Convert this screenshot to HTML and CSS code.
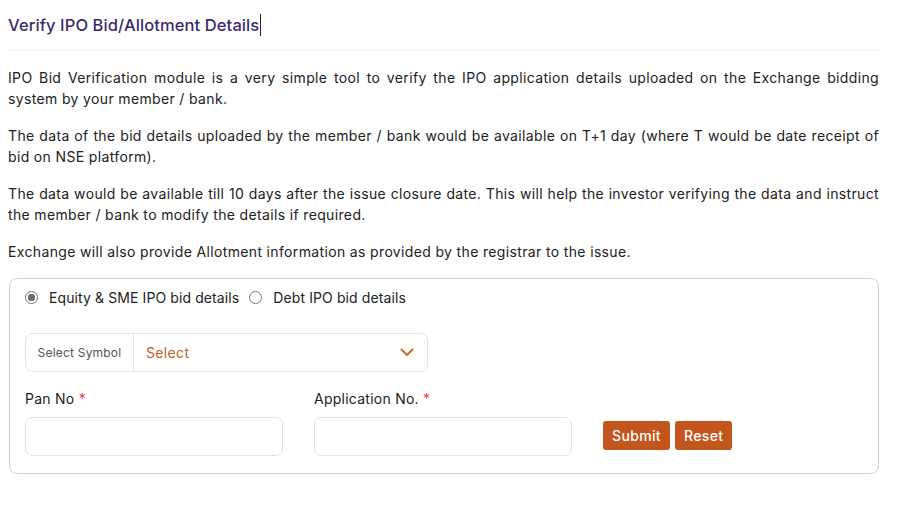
FILE: index.html
```html
<!DOCTYPE html>
<html lang="en">
<head>
<meta charset="utf-8">
<title>Verify IPO Bid/Allotment Details</title>
<link rel="stylesheet" href="styles.css">
</head>
<body>
<div class="page">
  <div class="title-row">
    <h1 class="title">Verify IPO Bid/Allotment Details</h1><span class="caret"></span>
  </div>
  <div class="content">
    <p>IPO Bid Verification module is a very simple tool to verify the IPO application details uploaded on the Exchange bidding system by your member / bank.</p>
    <p>The data of the bid details uploaded by the member / bank would be available on T+1 day (where T would be date receipt of bid on NSE platform).</p>
    <p>The data would be available till 10 days after the issue closure date. This will help the investor verifying the data and instruct the member / bank to modify the details if required.</p>
    <p>Exchange will also provide Allotment information as provided by the registrar to the issue.</p>
  </div>
  <form class="card">
    <div class="radios">
      <label class="radio"><span class="dot checked"></span>Equity &amp; SME IPO bid details</label>
      <label class="radio"><span class="dot"></span>Debt IPO bid details</label>
    </div>
    <div class="select-group">
      <span class="addon">Select Symbol</span>
      <span class="select">Select
        <svg class="chev" width="14" height="9" viewBox="0 0 14 9"><path d="M1.5 1.5 L7 7 L12.5 1.5" fill="none" stroke="#d2691e" stroke-width="2" stroke-linecap="round" stroke-linejoin="round"/></svg>
      </span>
    </div>
    <div class="fields">
      <div class="field">
        <div class="label">Pan No <span class="req">*</span></div>
        <div class="input"></div>
      </div>
      <div class="field">
        <div class="label">Application No. <span class="req">*</span></div>
        <div class="input"></div>
      </div>
      <div class="actions">
        <button type="button" class="btn">Submit</button>
        <button type="button" class="btn">Reset</button>
      </div>
    </div>
  </form>
</div>
</body>
</html>
```
FILE: styles.css
```css
* { box-sizing: border-box; }
html, body { margin: 0; padding: 0; background: #fff; }
body {
  font-family: "Inter", "Open Sans", sans-serif;
  color: #212121;
  font-size: 14px;
  letter-spacing: 0.35px;
}
.page {
  width: 871px;
  margin-left: 8px;
  padding-top: 12px;
}
.title-row {
  display: flex;
  align-items: center;
  height: 26px;
  padding-bottom: 12px;
  border-bottom: 1px solid #f0f0f0;
  box-sizing: content-box;
}
.title {
  margin: 0;
  font-size: 16.5px;
  font-weight: 500;
  color: #3b2a6b;
  line-height: 26px;
  letter-spacing: 0.1px;
}
.caret {
  display: inline-block;
  width: 1px;
  height: 22px;
  background: #222;
  margin-left: 1px;
}
.content { padding-top: 16px; }
.content p {
  margin: 0 0 16px;
  line-height: 21px;
  text-align: justify;
  font-size: 14px;
}
.card {
  margin-left: 1px;
  border: 1px solid #cfcfcf;
  border-radius: 8px;
  padding: 9px 15px 16px;
  height: 196px;
}
.radios {
  display: flex;
  gap: 10px;
  align-items: center;
  height: 18px;
}
.radio {
  display: flex;
  align-items: center;
  gap: 11px;
  font-size: 14px;
  color: #222;
  letter-spacing: 0.1px;
}
.dot {
  width: 13px;
  height: 13px;
  border: 1px solid #777;
  border-radius: 50%;
  background: #fff;
}
.dot.checked {
  border-color: #6b6f7a;
  background: radial-gradient(circle, #6b6f7a 0 3.5px, #fff 4px);
}
.select-group {
  margin-top: 27px;
  width: 403px;
  height: 39px;
  display: flex;
  border: 1px solid #e6e6e6;
  border-radius: 7px;
}
.addon {
  width: 108px;
  display: flex;
  align-items: center;
  justify-content: center;
  font-size: 12px;
  color: #555;
  border-right: 1px solid #e6e6e6;
  letter-spacing: 0.2px;
}
.select {
  flex: 1;
  display: flex;
  align-items: center;
  justify-content: space-between;
  padding: 0 13px 0 12px;
  color: #c0602a;
  font-size: 14px;
}
.fields {
  margin-top: 17px;
  display: grid;
  grid-template-columns: 258px 258px auto;
  column-gap: 31px;
  align-items: end;
}
.label {
  font-size: 14px;
  line-height: 20px;
  color: #222;
  margin-bottom: 8px;
  letter-spacing: 0.25px;
}
.req { color: #e0484b; }
.input {
  height: 39px;
  border: 1px solid #e3e3e3;
  border-radius: 7px;
}
.actions {
  display: flex;
  gap: 5px;
  padding-bottom: 6px;
}
.btn {
  font-family: inherit;
  font-size: 14px;
  font-weight: 500;
  letter-spacing: 0.35px;
  color: #fff;
  background: #c2561c;
  border: none;
  border-radius: 3px;
  height: 29px;
  padding: 0 9px;
}
```
